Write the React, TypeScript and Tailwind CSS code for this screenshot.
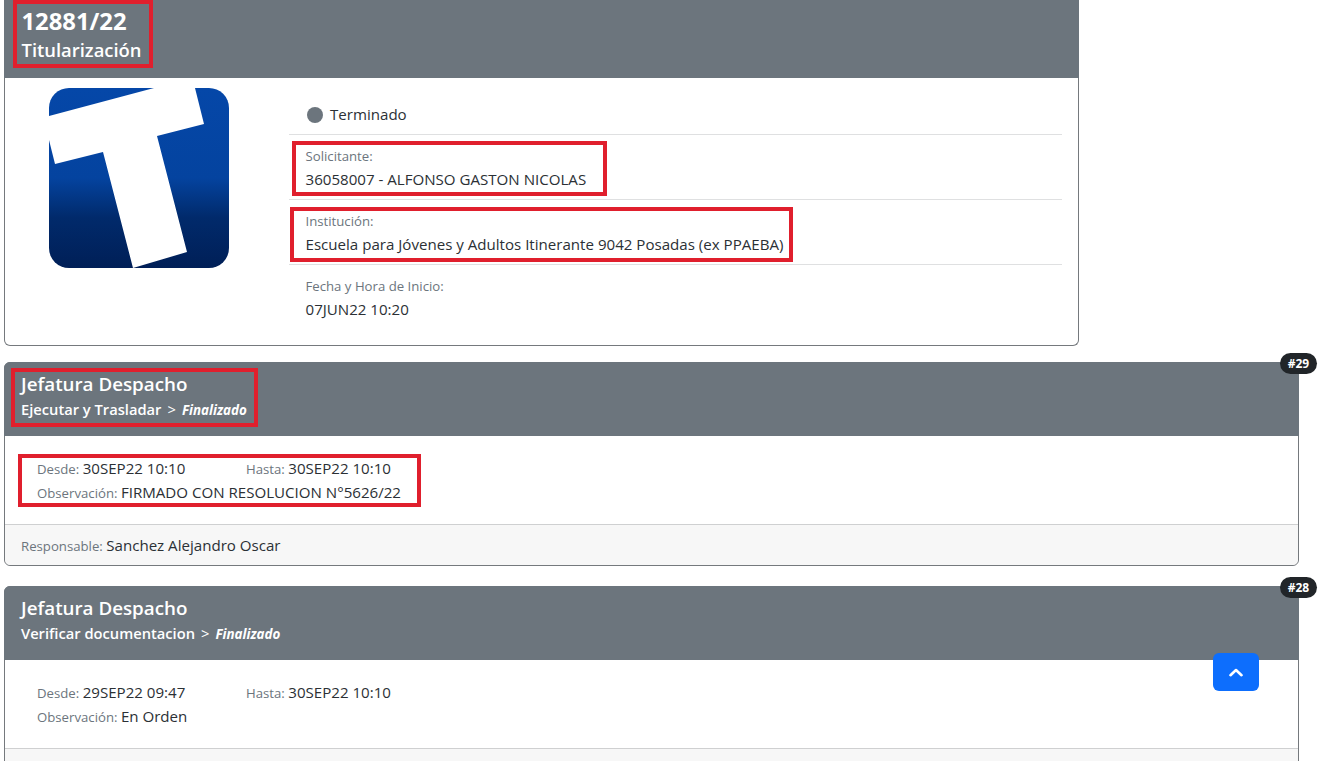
const font = { fontFamily: '"Open Sans", "Noto Sans", sans-serif' };

function RedBox({ className }: { className: string }) {
  return <span className={`absolute border-[4px] border-[#e01f2d] pointer-events-none ${className}`} />;
}

function Logo() {
  return (
    <svg width="180" height="180" viewBox="0 0 180 180" className="shrink-0">
      <defs>
        <linearGradient id="logoBlue" x1="0" y1="0" x2="0" y2="1">
          <stop offset="0" stopColor="#0547a8" />
          <stop offset="0.5" stopColor="#04439f" />
          <stop offset="0.72" stopColor="#012a6b" />
          <stop offset="1" stopColor="#001f57" />
        </linearGradient>
        <clipPath id="logoClip">
          <rect width="180" height="180" rx="20" />
        </clipPath>
      </defs>
      <g clipPath="url(#logoClip)">
        <rect width="180" height="180" fill="url(#logoBlue)" />
        <polygon points="0,28 105,0 146,0 155,36 108,48 138,164 84,180 54,64 6,76 0,52" fill="#fff" />
      </g>
    </svg>
  );
}

function InfoItem({ label, value, box, last }: { label: string; value: string; box?: string; last?: boolean }) {
  return (
    <div className={`relative h-[65px] pl-[16.5px] pr-[17px] pt-[11px] ${last ? '' : 'border-b border-[#dfe0e1]'}`}>
      {box && <RedBox className={box} />}
      <div className="text-[13.2px] leading-[20px] text-[#6c757d]">{label}</div>
      <div className="text-[15.1px] leading-[24px] mt-[1px] text-[#2b3035]">{value}</div>
    </div>
  );
}

function StepCard({
  num,
  title,
  task,
  desde,
  hasta,
  obs,
  responsable,
  boxes,
}: {
  num: string;
  title: string;
  task: string;
  desde: string;
  hasta: string;
  obs: string;
  responsable?: string;
  boxes?: boolean;
}) {
  return (
    <div className="relative w-[1295px] ml-[4px] rounded-[6px] border border-[#75797d] bg-white">
      <span className="absolute z-10 -top-[10px] -right-[19px] h-[21px] w-[37px] rounded-full bg-[#212529] text-white text-[12px] font-bold leading-[21px] text-center">
        {num}
      </span>
      <div className="relative -m-px h-[74px] rounded-t-[6px] bg-[#6c757d] pl-[17px] pt-[9px] text-white">
        {boxes && <RedBox className="left-[7px] top-[6px] h-[59px] w-[247px]" />}
        <div className="text-[18.8px] leading-[27px] font-semibold">{title}</div>
        <div className="flex items-baseline text-[14.7px] leading-[20px] mt-[1px] font-semibold">
          <span>{task}</span>
          <span className="ml-[6px] font-normal">&gt;</span>
          <span className="ml-[6px] text-[13.4px] italic font-bold">Finalizado</span>
        </div>
      </div>
      <div className="relative h-[89px] pl-[32px] pt-[21px]">
        {boxes && <RedBox className="left-[13px] top-[19px] h-[53px] w-[403px]" />}
        <div className="flex h-[24px] items-baseline">
          <div className="w-[209px]">
            <span className="text-[13.2px] text-[#6c757d]">Desde: </span>
            <span className="text-[15.1px] text-[#2b3035]">{desde}</span>
          </div>
          <div>
            <span className="text-[13.2px] text-[#6c757d]">Hasta: </span>
            <span className="text-[15.1px] text-[#2b3035]">{hasta}</span>
          </div>
        </div>
        <div className="h-[24px]">
          <span className="text-[13.2px] text-[#6c757d]">Observación: </span>
          <span className="text-[15.1px] text-[#2b3035]">{obs}</span>
        </div>
      </div>
      <div className="h-[41px] rounded-b-[6px] border-t border-[#cfd0d1] bg-[#f7f7f7] pl-[16px] pt-[8px]">
        {responsable && (
          <>
            <span className="text-[13.2px] text-[#6c757d]">Responsable: </span>
            <span className="text-[15.1px] text-[#2b3035]">{responsable}</span>
          </>
        )}
      </div>
    </div>
  );
}

export default function App() {
  return (
    <div className="h-screen overflow-hidden bg-white" style={font}>
      {/* Tramite */}
      <div className="w-[1075px] ml-[4px] rounded-b-[6px] border-x border-b border-[#75797d] bg-white">
        <div className="relative -mx-px h-[78px] bg-[#6c757d] pl-[17.5px] pt-[6px] text-white">
          <RedBox className="left-[9px] top-0 h-[68px] w-[140px]" />
          <div className="text-[23.8px] leading-[30px] font-bold">12881/22</div>
          <div className="text-[18.4px] leading-[26px] mt-[1px] font-semibold">Titularización</div>
        </div>
        <div className="flex h-[267px] pl-[44px] pr-[16px] pt-[10px]">
          <Logo />
          <div className="ml-[60px] flex-1">
            <div className="flex h-[47px] items-center border-b border-[#dfe0e1] pl-[18px] pt-[7px] text-[15.1px] text-[#2b3035]">
              <span className="h-4 w-4 rounded-full bg-[#6c757d]" />
              <span className="ml-[7px]">Terminado</span>
            </div>
            <InfoItem
              label="Solicitante:"
              value="36058007 - ALFONSO GASTON NICOLAS"
              box="left-[3px] top-[6px] h-[55px] w-[315px]"
            />
            <InfoItem
              label="Institución:"
              value="Escuela para Jóvenes y Adultos Itinerante 9042 Posadas (ex PPAEBA)"
              box="left-[1px] top-[7px] h-[55px] w-[503px]"
            />
            <InfoItem label="Fecha y Hora de Inicio:" value="07JUN22 10:20" last />
          </div>
        </div>
      </div>

      <div className="mt-4">
        <StepCard
          num="#29"
          title="Jefatura Despacho"
          task="Ejecutar y Trasladar"
          desde="30SEP22 10:10"
          hasta="30SEP22 10:10"
          obs="FIRMADO CON RESOLUCION N°5626/22"
          responsable="Sanchez Alejandro Oscar"
          boxes
        />
      </div>
      <div className="mt-[20px]">
        <StepCard
          num="#28"
          title="Jefatura Despacho"
          task="Verificar documentacion"
          desde="29SEP22 09:47"
          hasta="30SEP22 10:10"
          obs="En Orden"
        />
      </div>

      {/* Volver arriba */}
      <button className="fixed left-[1213px] top-[653px] flex h-[38px] w-[46px] items-center justify-center rounded-[6px] bg-[#0d6efd]">
        <svg width="14" height="9" viewBox="0 0 14 9" fill="none" stroke="#fff" strokeWidth="2.6" strokeLinecap="round" strokeLinejoin="round">
          <path d="M1.5 7.2 7 2l5.5 5.2" />
        </svg>
      </button>
    </div>
  );
}
